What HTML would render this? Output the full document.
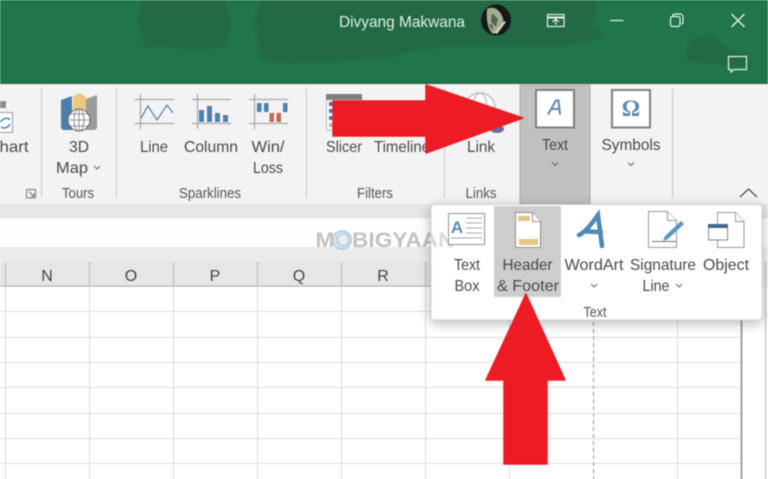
<!DOCTYPE html>
<html><head><meta charset="utf-8"><style>
html,body{margin:0;padding:0;background:#fff;width:768px;height:479px;overflow:hidden}
svg{display:block;filter:blur(.4px)}
text{font-family:"Liberation Sans",sans-serif;font-size:16px;fill:#4a4a4a;text-anchor:middle}
.s{font-size:14.5px;fill:#555}
.g{stroke:#dcdcdc;stroke-width:1;fill:none}
.sep{stroke:#c8c8c8;stroke-width:1}
.ch{fill:none;stroke:#666;stroke-width:1}
</style></head><body>
<svg width="768" height="479" viewBox="0 0 768 479" xmlns="http://www.w3.org/2000/svg">
<defs>
<filter id="b" x="-10%" y="-10%" width="120%" height="120%"><feGaussianBlur stdDeviation="1.200"/></filter>
<clipPath id="pc"><rect x="431" y="204" width="331" height="116"/></clipPath>
</defs>
<!-- green title -->
<rect width="768" height="84" fill="#21754a"/>
<g fill="#246a44" filter="url(#b)">
<path d="M143 0C136 14 137 32 146 42L139 47C165 45 200 53 222 47C233 38 232 14 224 0Z"/>
<path d="M260 0C253 18 254 40 262 52L253 55C270 64 292 65 320 62C350 60 375 61 398 56C420 46 480 44 520 46C555 48 585 44 603 37C604 31 597 28 590 25C600 14 598 6 594 0Z"/>
<path d="M686 60C684 46 692 35 706 35C716 36 722 48 740 52C750 56 752 64 752 68C730 62 708 66 686 60Z"/>
</g>
<rect y="83" width="768" height="1" fill="#2f5c44"/>
<text x="402" y="27" textLength="126" lengthAdjust="spacingAndGlyphs" style="fill:#dfeee5">Divyang Makwana</text>
<!-- avatar -->
<ellipse cx="496" cy="20" rx="15" ry="15.500" fill="#17171a"/>
<path d="M487 9C494 5 500 10 503 18C504 24 500 30 493 34C488 30 486 20 487 9Z" fill="#a3ad92"/>
<path d="M492 13l6 6-2 8-5-5zM489 24l4 1-1 6z" fill="#59654a"/>
<path d="M494 33l10-12 2 1-9 12z" fill="#c8cfc0"/>
<!-- window icons -->
<g fill="none" stroke="#e4efe8" stroke-width="1.200">
<rect x="547.500" y="14.500" width="16.500" height="12"/>
<path d="M547.500 17.500h16.500" stroke-width="2"/>
<path d="M555.700 25v-6M552.500 22l3.200-3.200 3.200 3.200"/>
<path d="M610 20.500h13.500"/>
<rect x="670.500" y="16.500" width="9.500" height="10" rx="2"/>
<path d="M673 16v-1a1.500 1.500 0 0 1 1.500-1h5.500a3 3 0 0 1 3 3v5.500a1.500 1.500 0 0 1-1.500 1.500"/>
<path d="M731.500 14l13 13M744.500 14l-13 13" stroke-width="1.400"/>
<path d="M728.500 56.500h18v13h-12.500l-3 2.500v-2.500h-2.500z"/>
</g>
<!-- ribbon -->
<rect y="84" width="768" height="120" fill="#f3f3f3"/>
<rect y="204" width="768" height="14" fill="#e6e6e6"/>
<rect y="217.500" width="768" height="1" fill="#d6d6d6"/>
<rect y="218" width="768" height="29" fill="#fefefe"/>
<rect y="247" width="768" height="15" fill="#ebebeb"/>
<rect y="262" width="742" height="24" fill="#e6e6e6"/>
<rect y="285.600" width="742" height="1" fill="#a8a8a8"/>
<rect x="742" y="262" width="26" height="217" fill="#fff"/>
<rect x="742" y="247" width="26" height="40" fill="#f2f2f2"/>
<!-- grid -->
<g class="g">
<path d="M0 311.500H742M0 337.500H742M0 362.500H742M0 387.500H742M0 413.500H742M0 438.500H742M0 463.500H742"/>
<path d="M5.500 287V479M89.500 287V479M173.500 287V479M257.500 287V479M341.500 287V479M425.500 287V479M509.500 287V479M677.500 287V479"/>
</g>
<path d="M593.500 287V479" stroke="#9a9a9a" stroke-dasharray="4 3" fill="none"/>
<path d="M741.500 262V479" stroke="#8c8c8c" stroke-width="1.600"/>
<path d="M765.500 262V479" stroke="#c0c0c0" stroke-width="1.200"/>
<path d="M5.500 262V286M89.500 262V286M173.500 262V286M257.500 262V286M341.500 262V286M425.500 262V286" stroke="#b8b8b8"/>
<text x="47" y="281" style="font-size:16px;fill:#444">N</text>
<text x="131" y="281" style="font-size:16px;fill:#444">O</text>
<text x="215" y="281" style="font-size:16px;fill:#444">P</text>
<text x="299" y="281" style="font-size:16px;fill:#444">Q</text>
<text x="383" y="281" style="font-size:16px;fill:#444">R</text>
<!-- separators -->
<g class="sep"><path d="M41.500 88V198M116.500 88V198M306.500 88V198M444.500 88V198M672.500 88V198"/></g>
<!-- text selected -->
<rect x="520" y="85" width="70" height="119" fill="#c1c1c1" stroke="#adadad"/>
<!-- partial chart icon -->
<rect x="0" y="101" width="6" height="7" fill="#8c8c8c"/>
<rect x="-2" y="112.500" width="14.500" height="20" fill="#fff" stroke="#9a9a9a"/>
<path d="M0 122C4 118 8 117 10 120M10 124C8 128 4 129 1 127" fill="none" stroke="#3f8cc0" stroke-width="1.500"/>
<text x="14" y="152" textLength="29" lengthAdjust="spacingAndGlyphs">hart</text>
<path d="M26.500 189.500h9v8.500M26.500 189.500v8.500h9M29 191.500l5 5M34 193.500v3h-3" fill="none" stroke="#777"/>
<!-- 3D map -->
<path d="M61 100l11-4v34h-8a3 3 0 0 1-3-3z" fill="#4c80ac"/>
<path d="M73 97l6-4 7 4v25H73z" fill="#e9c97e"/>
<path d="M86 99l11-4v32a3 3 0 0 1-3 3h-8z" fill="#9b9b9b"/>
<circle cx="79" cy="120" r="11" fill="#fff" stroke="#666" stroke-width="1"/>
<path d="M68 120h22M70 114h18M70 126h18M79 109v22" fill="none" stroke="#777" stroke-width=".8"/>
<ellipse cx="79" cy="120" rx="5" ry="11" fill="none" stroke="#777" stroke-width=".8"/>
<text x="79" y="152" textLength="20" lengthAdjust="spacingAndGlyphs">3D</text>
<text x="72" y="173" textLength="32" lengthAdjust="spacingAndGlyphs">Map</text>
<path class="ch" d="M94 166l3 3 3-3"/>
<text class="s" x="78" y="198" textLength="32" lengthAdjust="spacingAndGlyphs">Tours</text>
<!-- line -->
<g stroke="#a6a6a6" stroke-width="1.200" fill="none">
<path d="M135 99.500h39M135 123.500h39M140.500 94v35"/>
<path d="M192 99.500h39M192 123.500h39M197.500 94v35"/>
<path d="M249 99.500h39M249 123.500h39M254.500 94v35"/>
</g>
<path d="M141 118l7-12 9 14 10-15 6 8" fill="none" stroke="#5d8bab" stroke-width="1.300"/>
<g fill="#4f81ac">
<rect x="199" y="110" width="5" height="12"/><rect x="207" y="106" width="5" height="16"/><rect x="215" y="113" width="5" height="9"/><rect x="223" y="115" width="5" height="7"/>
<rect x="257" y="103" width="4.500" height="9"/><rect x="264" y="103" width="4.500" height="9"/><rect x="283" y="103" width="4.500" height="9"/>
</g>
<rect x="269.500" y="113" width="4.500" height="9" fill="#c8674a"/><rect x="276.500" y="113" width="4.500" height="9" fill="#c8674a"/>
<text x="154" y="152" textLength="28" lengthAdjust="spacingAndGlyphs">Line</text>
<text x="211" y="152" textLength="54" lengthAdjust="spacingAndGlyphs">Column</text>
<text x="268" y="152" textLength="33" lengthAdjust="spacingAndGlyphs">Win/</text>
<text x="268" y="173" textLength="30" lengthAdjust="spacingAndGlyphs">Loss</text>
<text class="s" x="210" y="198" textLength="62" lengthAdjust="spacingAndGlyphs">Sparklines</text>
<!-- slicer -->
<rect x="326" y="94" width="36" height="6" fill="#7e7e7e"/>
<rect x="326.500" y="100" width="35" height="30" fill="#fff" stroke="#bbb"/>
<g fill="#5c6aa8"><rect x="329" y="102" width="4" height="4"/><rect x="329" y="109" width="4" height="4"/><rect x="329" y="116" width="4" height="4"/></g>
<rect x="329" y="123" width="4" height="4" fill="#d8a8c0"/>
<text x="344" y="152" textLength="36" lengthAdjust="spacingAndGlyphs">Slicer</text>
<text x="402" y="152" textLength="56" lengthAdjust="spacingAndGlyphs">Timeline</text>
<!-- link -->
<circle cx="480" cy="108" r="15" fill="#fff" stroke="#aaa"/>
<ellipse cx="480" cy="108" rx="7" ry="15" fill="none" stroke="#aaa"/>
<path d="M465 108h30" stroke="#aaa"/>
<ellipse cx="497" cy="129" rx="7" ry="4" fill="#6c6aa8"/>
<text x="481" y="152" textLength="28" lengthAdjust="spacingAndGlyphs">Link</text>
<text class="s" x="375" y="198" textLength="36" lengthAdjust="spacingAndGlyphs">Filters</text>
<text class="s" x="481" y="198" textLength="31" lengthAdjust="spacingAndGlyphs">Links</text>
<!-- text + symbols -->
<rect x="536" y="90" width="38" height="37.500" fill="#fff" stroke="#7f7f7f" stroke-width="2"/>
<path d="M548 114.500l8-14h2.500l1.500 14M551 109h8" fill="none" stroke="#5b89ad" stroke-width="2"/>
<text x="555" y="150" textLength="26" lengthAdjust="spacingAndGlyphs">Text</text>
<path class="ch" d="M552 162.500l3 3 3-3"/>
<rect x="612" y="90" width="38" height="37.500" fill="#fff" stroke="#7f7f7f" stroke-width="2"/>
<text x="631" y="116" style="font-family:'Liberation Serif',serif;font-size:23px;font-weight:bold;fill:#5b89ad">Ω</text>
<text x="631" y="150" textLength="59" lengthAdjust="spacingAndGlyphs">Symbols</text>
<path class="ch" d="M628 162.500l3 3 3-3"/>
<path d="M740 197l8.500-8 8.500 8" fill="none" stroke="#555" stroke-width="1.300"/>
<!-- watermark -->
<text x="385" y="247" textLength="139" lengthAdjust="spacingAndGlyphs" style="font-size:21px;font-weight:bold;fill:#c2c2c2">MOBIGYAAN</text>
<circle cx="342" cy="240" r="9" fill="#cfe3ef" fill-opacity=".55" stroke="#b3d3e8" stroke-width="2"/>
<!-- popup -->
<rect x="431" y="204.500" width="331" height="115.500" rx="3" fill="#fff" stroke="#d2d2d2" style="filter:drop-shadow(0 3px 6px rgba(0,0,0,.28))"/>
<g clip-path="url(#pc)"><text x="385" y="247" textLength="139" lengthAdjust="spacingAndGlyphs" style="font-size:21px;font-weight:bold;fill:#dadada">MOBIGYAAN</text></g>
<rect x="494" y="206" width="67" height="91" fill="#cdcdcd"/>
<!-- textbox icon -->
<rect x="448.500" y="213.500" width="36" height="31" fill="#fff" stroke="#8f8f8f"/>
<text x="457" y="233" style="font-size:17px;font-weight:bold;fill:#5b8db4">A</text>
<path d="M466 218h16M466 223h16M466 228h16M466 233h16M451 238h31" stroke="#a8a8a8" fill="none"/>
<!-- header footer icon -->
<path d="M515.500 212.500h17l8 9v26h-25z" fill="#fff" stroke="#8f8f8f"/>
<path d="M532.500 212.500v9h8" fill="#fff" stroke="#8f8f8f"/>
<rect x="518" y="216" width="12" height="5" fill="#e6c483"/>
<rect x="519" y="239" width="19" height="6" fill="#e6c483"/>
<!-- wordart -->
<path d="M579 235C586 232 592 223 598 215L602 246M585 231C590 232 596 232 601 232" fill="none" stroke="#4f87b5" stroke-width="4.500" stroke-linecap="round"/>
<!-- signature -->
<path d="M648.500 211.500h19l9 9v27h-28z" fill="#fff" stroke="#999"/>
<path d="M667.500 211.500v9h9" fill="#fff" stroke="#999"/>
<path d="M652 241.500h25" stroke="#777" fill="none"/>
<path d="M665 236l16-15 3 3-16 15-5 2z" fill="#5b95c4"/>
<!-- object -->
<path d="M717.500 212.500h18l8.500 9v26h-26.500z" fill="#fff" stroke="#999"/>
<path d="M735.500 212.500v9h8.500" fill="#fff" stroke="#999"/>
<rect x="708.500" y="224.500" width="19" height="15.500" fill="#fff" stroke="#888"/>
<rect x="708" y="224" width="20" height="4" fill="#44688c"/>
<!-- popup labels -->
<text x="467" y="270" textLength="26" lengthAdjust="spacingAndGlyphs">Text</text>
<text x="467" y="291" textLength="25" lengthAdjust="spacingAndGlyphs">Box</text>
<text x="527.500" y="270" textLength="50" lengthAdjust="spacingAndGlyphs">Header</text>
<text x="528" y="291" textLength="62" lengthAdjust="spacingAndGlyphs">&amp; Footer</text>
<text x="594" y="270" textLength="59" lengthAdjust="spacingAndGlyphs">WordArt</text>
<path class="ch" d="M591 284l3 3 3-3"/>
<text x="663" y="270" textLength="66" lengthAdjust="spacingAndGlyphs">Signature</text>
<text x="656" y="291" textLength="27" lengthAdjust="spacingAndGlyphs">Line</text>
<path class="ch" d="M676 284l3 3 3-3"/>
<text x="726" y="270" textLength="46" lengthAdjust="spacingAndGlyphs">Object</text>
<text class="s" x="595" y="317" textLength="23" lengthAdjust="spacingAndGlyphs">Text</text>
<!-- arrows -->
<path d="M333 101H426V85L523 118L426 153V136H333Z" fill="#ed1c24" stroke="#ed1c24" stroke-width="1.500" stroke-linejoin="round"/>
<path d="M526 294L565 380H547V464H504V380H486Z" fill="#ed1c24" stroke="#ed1c24" stroke-width="1.500" stroke-linejoin="round"/>
</svg>
</body></html>
